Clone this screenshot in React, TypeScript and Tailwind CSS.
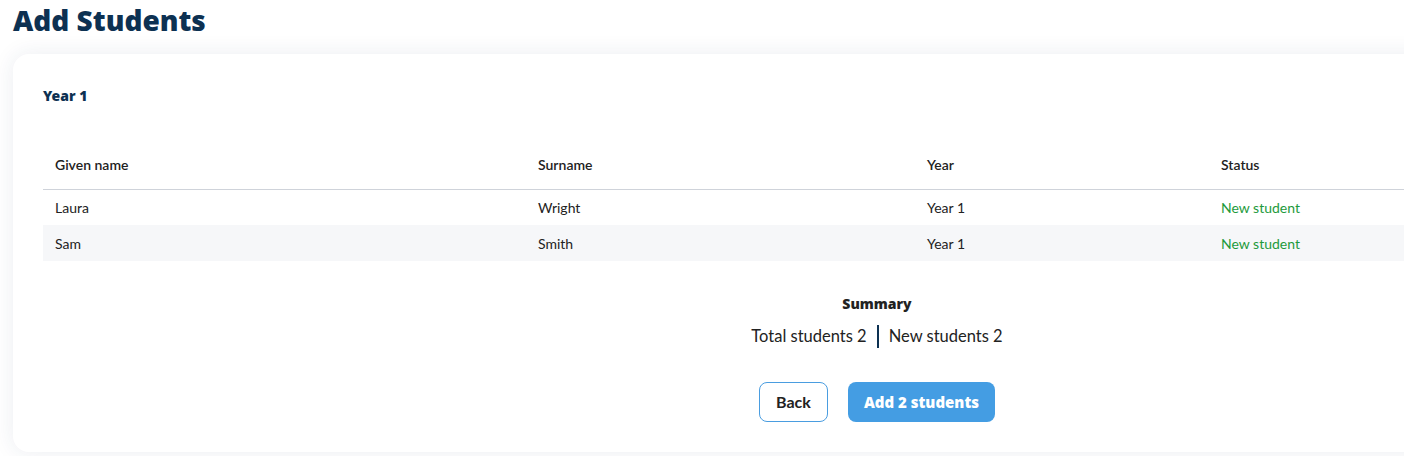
import React from "react"

const students = [
  { given: "Laura", surname: "Wright", year: "Year 1", status: "New student" },
  { given: "Sam", surname: "Smith", year: "Year 1", status: "New student" },
]

export default function App() {
  return (
    <div className="h-[456px] w-[1404px] overflow-hidden bg-white font-['Lato','Noto_Sans',sans-serif] text-[#222]">
      <h1 className="pl-[13px] pt-[2px] font-['Noto_Sans',sans-serif] text-[28px] font-black leading-[36px] text-[#0d3152]">
        Add Students
      </h1>

      {/* Card */}
      <div className="ml-[13px] mt-[16px] w-[1728px] rounded-2xl bg-white px-[30px] pb-[30px] pt-[30px] shadow-[0_0_22px_rgba(30,55,100,0.09)]">
        <h2 className="font-['Noto_Sans',sans-serif] text-[14px] font-black leading-6 text-[#0d3152]">Year 1</h2>

        <table className="mt-[33px] w-full border-collapse text-[14px]">
          <thead>
            <tr className="h-12 border-b border-[#cfd3da] text-left">
              <th className="w-[495px] pl-3 font-semibold">Given name</th>
              <th className="w-[389px] font-semibold">Surname</th>
              <th className="w-[294px] font-semibold">Year</th>
              <th className="font-semibold">Status</th>
            </tr>
          </thead>
          <tbody>
            {students.map((s, i) => (
              <tr key={s.given} className={i % 2 === 1 ? "h-9 bg-[#f6f7f9]" : "h-9"}>
                <td className="pl-3">{s.given}</td>
                <td>{s.surname}</td>
                <td>{s.year}</td>
                <td className="text-[#1e9a3c]">{s.status}</td>
              </tr>
            ))}
          </tbody>
        </table>

        {/* Summary */}
        <div className="mt-[31px] flex flex-col items-center">
          <div className="font-['Noto_Sans',sans-serif] text-[14px] font-black leading-6 text-[#222]">Summary</div>
          <div className="mt-2 flex items-center text-[16.5px] leading-6">
            <span>Total students 2</span>
            <span className="mx-[10px] h-[23px] w-[2px] bg-[#0d3152]" />
            <span>New students 2</span>
          </div>
          <div className="mt-[34px] flex gap-5">
            <button className="h-10 w-[69px] rounded-lg border border-[#4a9de0] bg-white text-[16px] font-bold text-[#222]">
              Back
            </button>
            <button className="h-10 w-[147px] rounded-lg bg-[#449de3] font-['Noto_Sans',sans-serif] text-[15px] font-black text-white">
              Add 2 students
            </button>
          </div>
        </div>
      </div>
    </div>
  )
}
